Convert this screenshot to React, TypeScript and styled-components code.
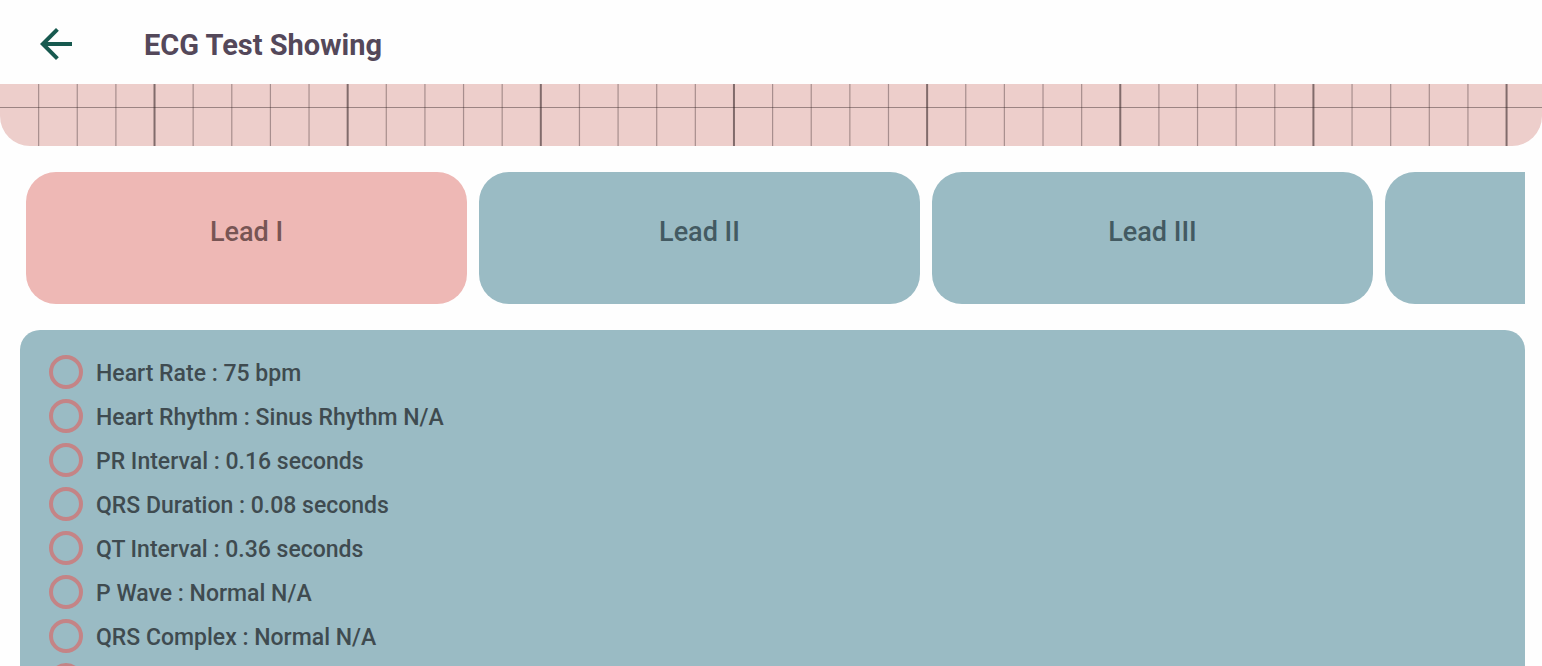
import { useState } from "react";
import styled, { createGlobalStyle } from "styled-components";

const GlobalStyle = createGlobalStyle`
  *, *::before, *::after { box-sizing: border-box; }
  body { margin: 0; background: #fefefe; font-family: Roboto, "Liberation Sans", sans-serif; }
`;

const Screen = styled.div`
  display: flex;
  flex-direction: column;
  height: 100vh;
`;

const Header = styled.header`
  display: flex;
  align-items: center;
  gap: 64px;
  padding: 20px 32px 16px;
`;

const BackButton = styled.button`
  display: flex;
  padding: 0;
  border: 0;
  background: none;
  color: #17594f;
  cursor: pointer;
`;

const Title = styled.h1`
  margin: 0;
  padding-top: 2px;
  font-size: 29px;
  line-height: 36px;
  font-weight: 700;
  color: #54485a;
`;

const Content = styled.main`
  flex: 1;
  min-height: 0;
  overflow-y: auto;
  scrollbar-width: none;
`;

const Strip = styled.svg`
  display: block;
  width: 100%;
  height: 62px;
  border-radius: 0 0 30px 30px;
  background: #edcecb;
`;

const LeadRow = styled.nav`
  display: flex;
  gap: 12px;
  margin: 26px 17px 26px 20px;
  padding-left: 6px;
  overflow-x: auto;
  scrollbar-width: none;
`;

const LeadButton = styled.button<{ $active: boolean }>`
  flex: 0 0 441px;
  height: 132px;
  padding: 0 0 12px;
  border: 0;
  border-radius: 30px;
  background: ${(p) => (p.$active ? "#eeb8b5" : "#9abbc4")};
  color: ${(p) => (p.$active ? "#775554" : "#435a62")};
  font-family: inherit;
  font-size: 27px;
  font-weight: 500;
  cursor: pointer;
`;

const Results = styled.section`
  margin: 0 17px 20px 20px;
  padding: 20px 29px;
  border-radius: 20px;
  background: #9abbc4;
`;

const Result = styled.label`
  display: flex;
  align-items: center;
  gap: 13px;
  height: 44px;
  color: #3f4b50;
  font-size: 23px;
  line-height: 40px;
  font-weight: 500;
`;

const ResultText = styled.span`
  padding-top: 4px;
`;

const Ring = styled.input`
  appearance: none;
  flex: none;
  width: 34px;
  height: 34px;
  margin: 0;
  border: 4px solid #c48486;
  border-radius: 50%;
  cursor: pointer;

  &:checked { background: #c48486; }
`;

const leads = ["Lead I", "Lead II", "Lead III", "aVR"];

const results = [
  "Heart Rate : 75 bpm",
  "Heart Rhythm : Sinus Rhythm N/A",
  "PR Interval : 0.16 seconds",
  "QRS Duration : 0.08 seconds",
  "QT Interval : 0.36 seconds",
  "P Wave : Normal N/A",
  "QRS Complex : Normal N/A",
  "T Wave : Normal N/A",
];

const CELL = 38.63;
const columns = Array.from({ length: 100 }, (_, i) => i + 1);

/* Lower edge of the ECG paper: every fifth vertical line is a heavy one. */
function EcgPaper() {
  return (
    <Strip role="img" aria-label="ECG paper">
      {columns.map((n) => {
        const major = n % 5 === 4;
        return (
          <line
            key={n}
            x1={n * CELL}
            x2={n * CELL}
            y1="0"
            y2="62"
            stroke="#2d1f20"
            strokeOpacity={major ? 0.56 : 0.36}
            strokeWidth={major ? 2 : 1.2}
          />
        );
      })}
      <line x1="0" x2="100%" y1="23.5" y2="23.5" stroke="#2d1f20" strokeOpacity="0.42" />
    </Strip>
  );
}

export default function App() {
  const [lead, setLead] = useState(leads[0]);
  return (
    <Screen>
      <GlobalStyle />
      <Header>
        <BackButton type="button" aria-label="Back">
          <svg width="48" height="48" viewBox="0 0 24 24" fill="currentColor" aria-hidden="true">
            <path d="M20 11H7.83l5.59-5.59L12 4l-8 8 8 8 1.41-1.41L7.83 13H20v-2z" />
          </svg>
        </BackButton>
        <Title>ECG Test Showing</Title>
      </Header>
      <Content>
        <EcgPaper />
        <LeadRow aria-label="Leads">
          {leads.map((name) => (
            <LeadButton key={name} type="button" $active={name === lead} onClick={() => setLead(name)}>
              {name}
            </LeadButton>
          ))}
        </LeadRow>
        <Results aria-label="Results">
          {results.map((text) => (
            <Result key={text}>
              <Ring type="radio" name="result" />
              <ResultText>{text}</ResultText>
            </Result>
          ))}
        </Results>
      </Content>
    </Screen>
  );
}
